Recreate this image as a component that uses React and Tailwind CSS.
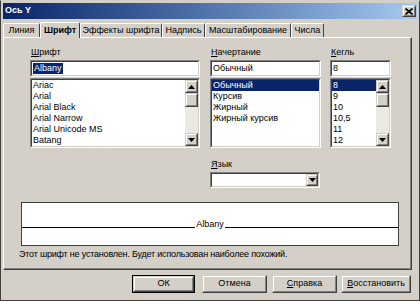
const fontItems = ['Ariac', 'Arial', 'Arial Black', 'Arial Narrow', 'Arial Unicode MS', 'Batang', 'Book Antiqua'];
const styleItems = ['Обычный', 'Курсив', 'Жирный', 'Жирный курсив'];
const sizeItems = ['8', '9', '10', '10,5', '11', '12', '13'];

const tabs = [
  { label: 'Линия', w: 'w-[37px]' },
  { label: 'Шрифт', w: 'w-[40px]', active: true },
  { label: 'Эффекты шрифта', w: 'w-[82px]' },
  { label: 'Надпись', w: 'w-[43px]' },
  { label: 'Масштабирование', w: 'w-[86px]' },
  { label: 'Числа', w: 'w-[33px]' },
];

const Sunken = ({ className = '', children }) => (
  <div className={`border border-[#808080] border-r-white border-b-white ${className}`}>
    <div className="h-full border border-[#404040] border-r-[#d4d0c8] border-b-[#d4d0c8] bg-white">
      {children}
    </div>
  </div>
);

const Raised = ({ className = '', children }) => (
  <div className={`border border-[#d4d0c8] border-r-[#404040] border-b-[#404040] bg-[#d4d0c8] ${className}`}>
    <div className="h-full border border-white border-r-[#808080] border-b-[#808080] flex items-center justify-center">
      {children}
    </div>
  </div>
);

const Arrow = ({ up }) => (
  <svg width="7" height="4" viewBox="0 0 7 4">
    <polygon points={up ? '3.5,0 7,4 0,4' : '0,0 7,0 3.5,4'} fill="#000" />
  </svg>
);

const ScrollBar = () => (
  <div className="w-[13px] h-full flex flex-col bg-[#ebe9e4]">
    <Raised className="h-[13px] shrink-0"><Arrow up /></Raised>
    <Raised className="h-[14px] shrink-0" />
    <div className="flex-1" />
    <Raised className="h-[13px] shrink-0"><Arrow /></Raised>
  </div>
);

const ListBox = ({ items, selected, scroll }) => (
  <Sunken className="h-[70px] mt-px">
    <div className="flex h-full overflow-hidden">
      <div className="flex-1 overflow-hidden">
        {items.map((item, i) => (
          <div
            key={item}
            className={`h-[11px] leading-[11px] pl-px whitespace-nowrap ${
              i === selected ? 'bg-[#0a246a] text-white' : 'text-black'
            }`}
          >
            {item}
          </div>
        ))}
      </div>
      {scroll && <ScrollBar />}
    </div>
  </Sunken>
);

const Field = ({ children }) => (
  <Sunken className="h-[17px]">
    <div className="h-full flex items-center pl-px leading-[11px]">{children}</div>
  </Sunken>
);

export default function App() {
  return (
    <div
      className="w-[420px] h-[304px] bg-white text-[9px] text-black"
      style={{ fontFamily: '"Liberation Sans", Arial, sans-serif' }}
    >
      <div className="h-[301px] bg-[#d4d0c8] border border-[#404040] border-t-[#d4d0c8] p-[2px] flex flex-col">
        {/* title bar */}
        <div className="h-[16px] shrink-0 flex items-center bg-gradient-to-r from-[#0a246a] to-[#a6caf0] pl-[2px] pr-px">
          <span className="flex-1 text-white font-bold text-[9px]">Ось Y</span>
          <Raised className="w-[14px] h-[12px]">
            <svg width="8" height="7" viewBox="0 0 8 7">
              <path d="M0.5 0.5 L7.5 6.5 M7.5 0.5 L0.5 6.5" stroke="#000" strokeWidth="1.6" />
            </svg>
          </Raised>
        </div>

        {/* tabs */}
        <div className="h-[16px] mt-[2px] shrink-0 flex items-end">
          {tabs.map((t) => (
            <div
              key={t.label}
              className={`${t.w} ${
                t.active ? 'h-[16px] font-bold bg-[#d4d0c8] relative z-10 -mb-px' : 'h-[14px]'
              } border-t border-l border-white border-r border-r-[#404040] rounded-t-[2px] flex items-center justify-center whitespace-nowrap leading-[11px]`}
            >
              {t.label}
            </div>
          ))}
        </div>

        {/* panel */}
        <div className="h-[233px] mr-[5px] shrink-0 border border-white border-r-[#404040] border-b-[#404040] shadow-[inset_-1px_-1px_#808080] flex flex-col">
          <div className="flex pl-[26px] pt-[9px]">
            <div className="w-[170px]">
              <div className="h-[11px] leading-[11px] mb-[2px] pl-px"><span className="underline">Ш</span>рифт</div>
              <Field>
                <span className="bg-[#0a246a] text-white px-px">Albany</span>
              </Field>
              <ListBox items={fontItems} selected={-1} scroll />
            </div>
            <div className="w-[111px] ml-[10px]">
              <div className="h-[11px] leading-[11px] mb-[2px] pl-px"><span className="underline">Н</span>ачертание</div>
              <Field>Обычный</Field>
              <ListBox items={styleItems} selected={0} />
              <div className="h-[11px] leading-[11px] mt-[11px] pl-px"><span className="underline">Я</span>зык</div>
              <Sunken className="h-[16px] mt-[2px] w-[110px]">
                <div className="flex h-full justify-end">
                  <Raised className="w-[12px] h-full"><Arrow /></Raised>
                </div>
              </Sunken>
            </div>
            <div className="w-[61px] ml-[9px]">
              <div className="h-[11px] leading-[11px] mb-[2px] pl-px"><span className="underline">К</span>егль</div>
              <Field>8</Field>
              <ListBox items={sizeItems} selected={0} scroll />
            </div>
          </div>

          {/* preview */}
          <div className="ml-[17px] mt-[14px] w-[378px] h-[44px] bg-white border border-[#404040] flex flex-col">
            <div className="h-[25px] flex items-end">
              <div className="flex-1 h-px bg-black" />
              <span className="leading-[8px] px-px">Albany</span>
              <div className="flex-1 h-px bg-black" />
            </div>
          </div>

          <div className="ml-[15px] mt-[3px] h-[11px] leading-[11px] whitespace-nowrap tracking-[-0.2px]">
            Этот шрифт не установлен. Будет использован наиболее похожий.
          </div>
        </div>

        {/* buttons */}
        <div className="flex mt-[5px] pl-[129px]">
          <div className="w-[63px] h-[18px] border border-black">
            <Raised className="h-full">ОК</Raised>
          </div>
          <Raised className="w-[65px] h-[18px] ml-[7px]">Отмена</Raised>
          <Raised className="w-[65px] h-[18px] ml-[5px]"><span><span className="underline">С</span>правка</span></Raised>
          <Raised className="w-[70px] h-[18px] ml-[4px]"><span><span className="underline">В</span>осстановить</span></Raised>
        </div>
      </div>
    </div>
  );
}
